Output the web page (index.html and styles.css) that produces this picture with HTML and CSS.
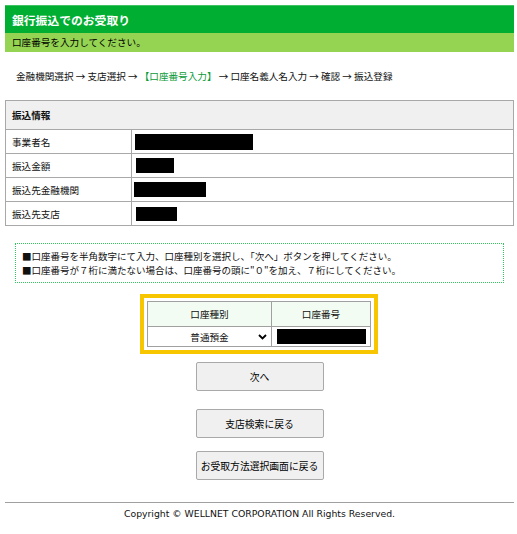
FILE: index.html
```html
<!DOCTYPE html>
<html lang="ja">
<head>
<meta charset="utf-8">
<title>銀行振込でのお受取り</title>
<link rel="stylesheet" href="styles.css">
</head>
<body>
<div class="page">
  <h1 class="title">銀行振込でのお受取り</h1>
  <p class="subtitle">口座番号を入力してください。</p>

  <p class="steps">金融機関選択 → 支店選択 → <span class="current">【口座番号入力】</span> → 口座名義人名入力 → 確認 → 振込登録</p>

  <table class="info">
    <tr><th colspan="2" class="info-head">振込情報</th></tr>
    <tr><td class="label">事業者名</td><td class="value"><span class="mask" style="width:118px;height:16px;margin-left:3px"></span></td></tr>
    <tr><td class="label">振込金額</td><td class="value"><span class="mask" style="width:38px;height:15px;margin-left:4px"></span></td></tr>
    <tr><td class="label">振込先金融機関</td><td class="value"><span class="mask" style="width:72px;height:15px;margin-left:2px"></span></td></tr>
    <tr><td class="label">振込先支店</td><td class="value"><span class="mask" style="width:41px;height:14px;margin-left:4px"></span></td></tr>
  </table>

  <div class="notes">
    <p>■口座番号を半角数字にて入力、口座種別を選択し、「次へ」ボタンを押してください。</p>
    <p>■口座番号が７桁に満たない場合は、口座番号の頭に"０"を加え、７桁にしてください。</p>
  </div>

  <div class="account-wrap">
    <table class="account">
      <tr><th>口座種別</th><th>口座番号</th></tr>
      <tr>
        <td class="select-cell">
          <span class="select">普通預金
            <svg class="chev" width="9" height="6" viewBox="0 0 9 6"><path d="M1 1l3.5 3.5L8 1" fill="none" stroke="#000" stroke-width="1.8"/></svg>
          </span>
        </td>
        <td class="input-cell"><span class="mask number"></span></td>
      </tr>
    </table>
  </div>

  <div class="buttons">
    <button class="btn">次へ</button>
    <button class="btn">支店検索に戻る</button>
    <button class="btn">お受取方法選択画面に戻る</button>
  </div>

  <footer class="footer">Copyright © WELLNET CORPORATION All Rights Reserved.</footer>
</div>
</body>
</html>
```
FILE: styles.css
```css
html, body {
  margin: 0;
  padding: 0;
  background: #fff;
}

body {
  font-family: "Noto Sans CJK JP", "Noto Sans", sans-serif;
  font-size: 9.6px;
  color: #111;
}

.page {
  width: 509px;
  margin: 5px 0 0 5px;
}

.title {
  margin: 0;
  height: 28px;
  line-height: 28px;
  padding-left: 7px;
  background: #00ae32;
  color: #fff;
  font-size: 11.8px;
  font-weight: bold;
  border-top: 1px solid #3cc25f;
  box-sizing: border-box;
}

.subtitle {
  margin: 0;
  height: 19px;
  line-height: 19px;
  padding-left: 7px;
  background: #95d353;
  color: #000;
}

.steps {
  margin: 15px 0 0 11px;
  height: 18px;
  line-height: 18px;
}

.steps .current {
  color: #0a9a37;
}

.info {
  margin-top: 15px;
  width: 509px;
  border-collapse: collapse;
  border: 1px solid #9c9c9c;
}

.info th, .info td {
  border: 1px solid #a8a8a8;
  padding: 0 6px;
  text-align: left;
}

.info-head {
  height: 28px;
  background: #f0f0f0;
  font-weight: bold;
}

.info td {
  height: 23px;
}

.info .label {
  width: 113px;
}

.info .value {
  padding: 0;
}

.mask {
  display: inline-block;
  background: #000;
  vertical-align: middle;
}

.notes {
  margin: 17px 10px 0 10px;
  padding: 5px 0 5px 6px;
  border: 1px dotted #2ec95a;
  line-height: 14px;
}

.notes p {
  margin: 0;
  font-size: 9.5px;
}

.account-wrap {
  width: 224px;
  margin: 11px 0 0 135px;
  padding: 3px;
  border: 4px solid #f7c600;
}

.account {
  width: 100%;
  border-collapse: collapse;
  border: 1px solid #9c9c9c;
}

.account th, .account td {
  border: 1px solid #a0a0a0;
  text-align: center;
  padding: 0;
}

.account th {
  height: 24px;
  background: #f2fcf2;
  font-weight: normal;
}

.account td {
  height: 19px;
}

.select-cell {
  width: 123px;
}

.select {
  display: flex;
  align-items: center;
  justify-content: center;
  position: relative;
}

.chev {
  position: absolute;
  right: 4px;
  top: 50%;
  margin-top: -3px;
}

.input-cell {
  padding: 0 4px 0 5px !important;
}

.mask.number {
  display: block;
  height: 15px;
  width: 89px;
}

.buttons {
  display: flex;
  flex-direction: column;
  align-items: center;
  gap: 18px;
  margin-top: 8px;
}

.btn {
  width: 128px;
  height: 29px;
  background: #f0f0f0;
  border: 1px solid #a9a9a9;
  border-radius: 2px;
  font-family: inherit;
  font-size: 9.8px;
  color: #000;
  padding: 0;
}

.buttons .btn:nth-child(3) {
  margin-top: -5px;
}

.footer {
  margin-top: 22px;
  border-top: 1px solid #a0a0a0;
  padding-top: 5px;
  text-align: center;
  font-family: "DejaVu Sans", sans-serif;
  font-size: 9.3px;
  color: #111;
}
```
